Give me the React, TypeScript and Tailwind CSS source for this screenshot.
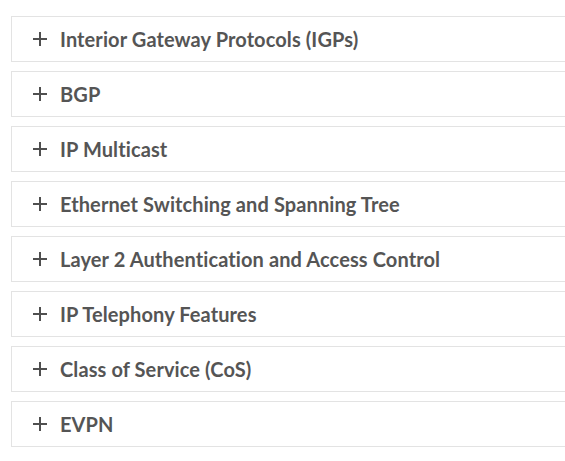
const SECTIONS = [
  'Interior Gateway Protocols (IGPs)',
  'BGP',
  'IP Multicast',
  'Ethernet Switching and Spanning Tree',
  'Layer 2 Authentication and Access Control',
  'IP Telephony Features',
  'Class of Service (CoS)',
  'EVPN',
]

function PlusIcon() {
  return (
    <svg width="14" height="14" viewBox="0 0 14 14" className="shrink-0">
      <path d="M7 0v14M0 7h14" stroke="#4f4f4f" strokeWidth="2" fill="none" />
    </svg>
  )
}

export default function App() {
  return (
    <div
      className="min-h-[461px] bg-white pt-4 pl-[11px] overflow-hidden"
      style={{ fontFamily: 'Lato, "Open Sans", sans-serif' }}
    >
      <div className="flex flex-col gap-[9px] w-[600px]">
        {SECTIONS.map((title) => (
          <button
            key={title}
            className="flex items-center h-[46px] border border-[#e3e3e3] bg-white pl-[21px] gap-[13px] text-left"
          >
            <PlusIcon />
            <span className="text-[20px] font-bold text-[#555555] leading-none tracking-[0.1px]">
              {title}
            </span>
          </button>
        ))}
      </div>
    </div>
  )
}
